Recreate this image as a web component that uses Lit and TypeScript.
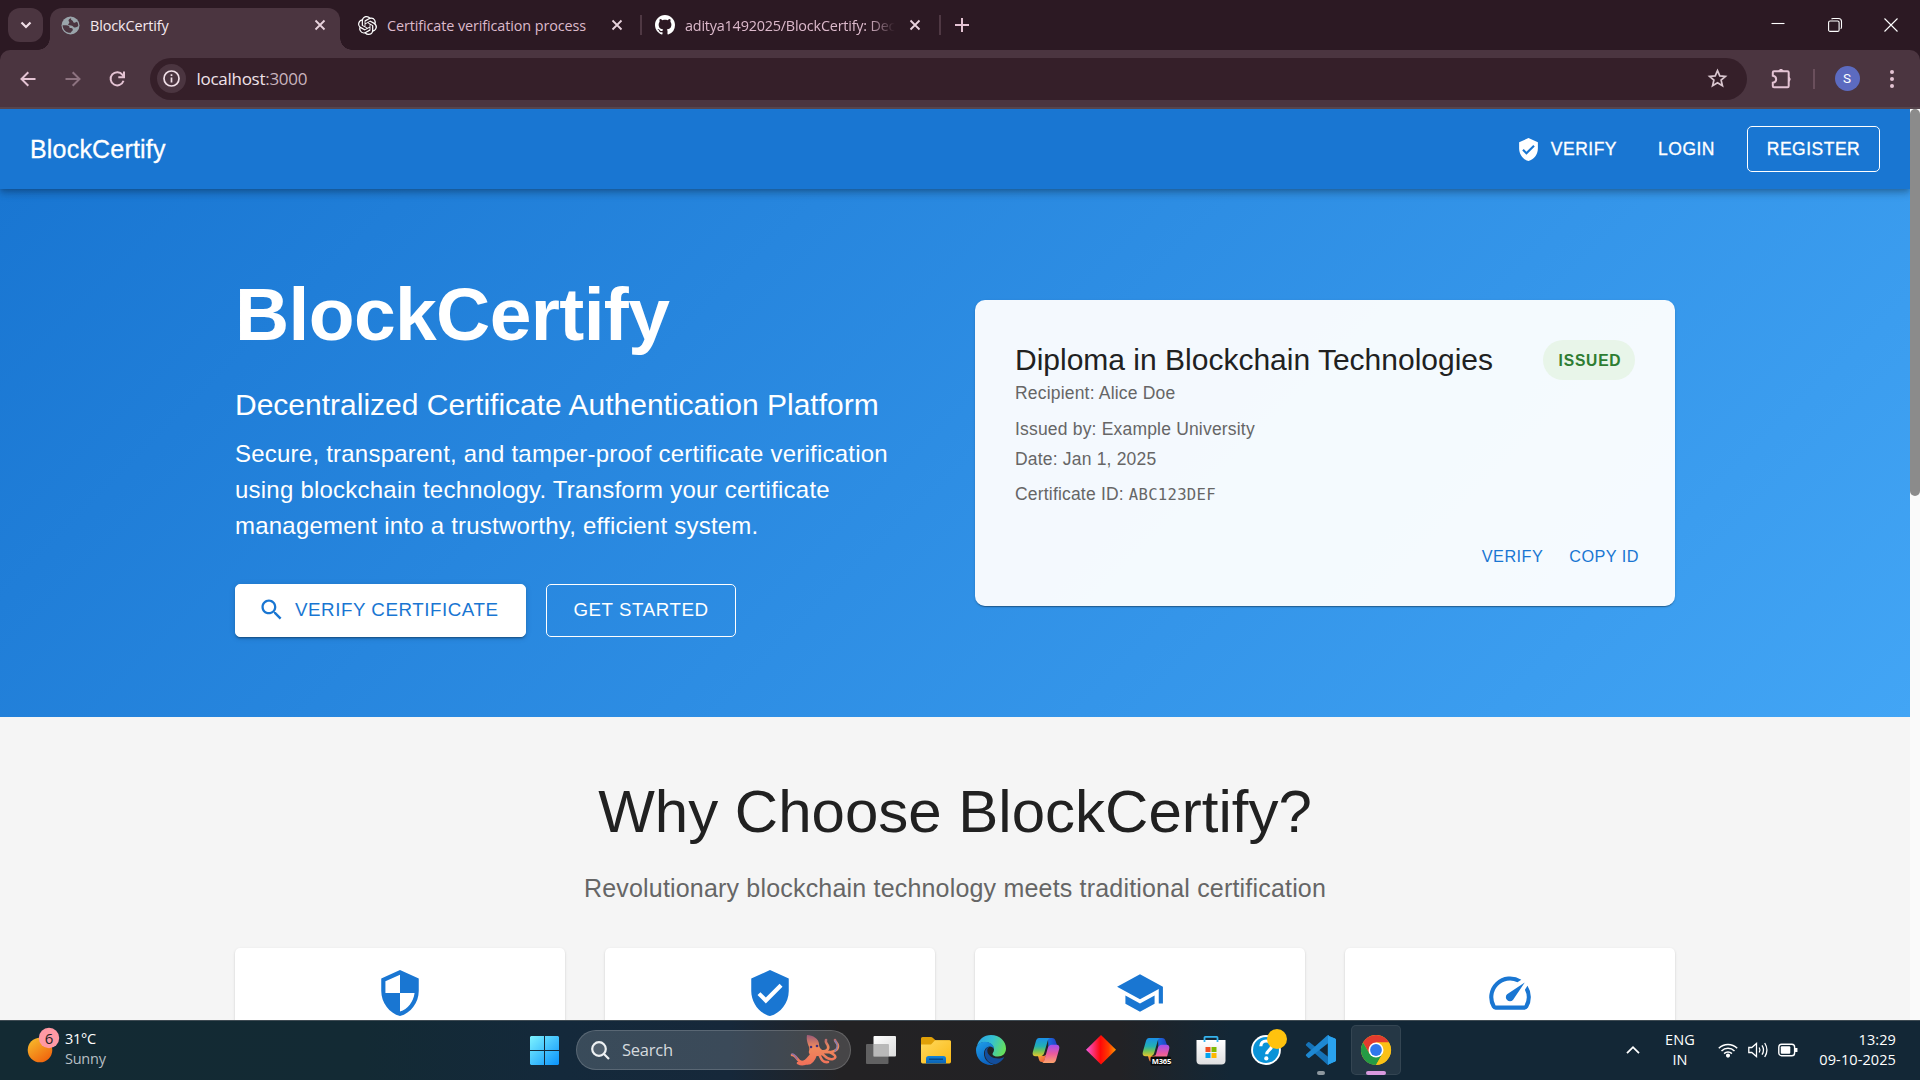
import { LitElement, html, svg, css, TemplateResult } from "lit";
import { customElement } from "lit/decorators.js";

const path = (d: string, cls = "icon") =>
  html`<svg class=${cls} viewBox="0 0 24 24"><path d=${d}></path></svg>`;

const VERIFIED =
  "M12 1L3 5v6c0 5.55 3.84 10.74 9 12 5.16-1.26 9-6.45 9-12V5l-9-4zm-2 16l-4-4 1.41-1.41L10 14.17l6.59-6.59L18 9l-8 8z";
const SECURITY =
  "M12 1L3 5v6c0 5.55 3.84 10.74 9 12 5.16-1.26 9-6.45 9-12V5l-9-4zm0 10.99h7c-.53 4.12-3.28 7.79-7 8.94V12H5V6.3l7-3.11v8.8z";
const SCHOOL =
  "M5 13.18v4L12 21l7-3.82v-4L12 17l-7-3.82zM12 3L1 9l11 6 9-4.91V17h2V9L12 3z";
const SPEED =
  "m20.38 8.57-1.23 1.85a8 8 0 0 1-.22 7.58H5.07A8 8 0 0 1 15.58 6.85l1.85-1.23A10 10 0 0 0 3.35 19a2 2 0 0 0 1.72 1h13.85a2 2 0 0 0 1.74-1 10 10 0 0 0-.27-10.44zm-9.79 6.84a2 2 0 0 0 2.83 0l5.66-8.49-8.49 5.66a2 2 0 0 0 0 2.83z";
const SEARCH =
  "M15.5 14h-.79l-.28-.27C15.41 12.59 16 11.11 16 9.5 16 5.91 13.09 3 9.5 3S3 5.91 3 9.5 5.91 16 9.5 16c1.61 0 3.09-.59 4.23-1.57l.27.28v.79l5 4.99L20.49 19l-4.99-5zm-6 0C7.01 14 5 11.99 5 9.5S7.01 5 9.5 5 14 7.01 14 9.5 11.99 14 9.5 14z";
const OPENAI =
  "M22.2819 9.8211a5.9847 5.9847 0 0 0-.5157-4.9108 6.0462 6.0462 0 0 0-6.5098-2.9A6.0651 6.0651 0 0 0 4.9807 4.1818a5.9847 5.9847 0 0 0-3.9977 2.9 6.0462 6.0462 0 0 0 .7427 7.0966 5.98 5.98 0 0 0 .511 4.9107 6.051 6.051 0 0 0 6.5146 2.9001A5.9847 5.9847 0 0 0 13.2599 24a6.0557 6.0557 0 0 0 5.7718-4.2058 5.9894 5.9894 0 0 0 3.9977-2.9001 6.0557 6.0557 0 0 0-.7475-7.0729zm-9.022 12.6081a4.4755 4.4755 0 0 1-2.8764-1.0408l.1419-.0804 4.7783-2.7582a.7948.7948 0 0 0 .3927-.6813v-6.7369l2.02 1.1686a.071.071 0 0 1 .038.052v5.5826a4.504 4.504 0 0 1-4.4945 4.4944zm-9.6607-4.1254a4.4708 4.4708 0 0 1-.5346-3.0137l.142.0852 4.783 2.7582a.7712.7712 0 0 0 .7806 0l5.8428-3.3685v2.3324a.0804.0804 0 0 1-.0332.0615L9.74 19.9502a4.4992 4.4992 0 0 1-6.1408-1.6464zM2.3408 7.8956a4.485 4.485 0 0 1 2.3655-1.9728V11.6a.7664.7664 0 0 0 .3879.6765l5.8144 3.3543-2.0201 1.1685a.0757.0757 0 0 1-.071 0l-4.8303-2.7865A4.504 4.504 0 0 1 2.3408 7.872zm16.5963 3.8558L13.1038 8.364 15.1192 7.2a.0757.0757 0 0 1 .071 0l4.8303 2.7913a4.4944 4.4944 0 0 1-.6765 8.1042v-5.6772a.79.79 0 0 0-.407-.667zm2.0107-3.0231l-.142-.0852-4.7735-2.7818a.7759.7759 0 0 0-.7854 0L9.409 9.2297V6.8974a.0662.0662 0 0 1 .0284-.0615l4.8303-2.7866a4.4992 4.4992 0 0 1 6.6802 4.66zM8.3065 12.863l-2.02-1.1638a.0804.0804 0 0 1-.038-.0567V6.0742a4.4992 4.4992 0 0 1 7.3757-3.4537l-.142.0805L8.704 5.459a.7948.7948 0 0 0-.3927.6813zm1.0976-2.3654l2.602-1.4998 2.6069 1.4998v2.9994l-2.5974 1.4997-2.6067-1.4997Z";
const GITHUB =
  "M8 0C3.58 0 0 3.58 0 8c0 3.54 2.29 6.53 5.47 7.59.4.07.55-.17.55-.38 0-.19-.01-.82-.01-1.49-2.01.37-2.53-.49-2.69-.94-.09-.23-.48-.94-.82-1.13-.28-.15-.68-.52-.01-.53.63-.01 1.08.58 1.23.82.72 1.21 1.87.87 2.33.66.07-.52.28-.87.51-1.07-1.78-.2-3.64-.89-3.64-3.95 0-.87.31-1.59.82-2.15-.08-.2-.36-1.02.08-2.12 0 0 .67-.21 2.2.82.64-.18 1.32-.27 2-.27s1.36.09 2 .27c1.53-1.04 2.2-.82 2.2-.82.44 1.1.16 1.92.08 2.12.51.56.82 1.27.82 2.15 0 3.07-1.87 3.75-3.65 3.95.29.25.54.73.54 1.48 0 1.07-.01 1.93-.01 2.2 0 .21.15.46.55.38A8.01 8.01 0 0 0 16 8c0-4.42-3.58-8-8-8z";

const closeIcon = html`<svg class="x" viewBox="0 0 12 12"><path d="M1.5 1.5l9 9M10.5 1.5l-9 9"></path></svg>`;

const ribbon = (id: string) => svg`
  <defs>
    <linearGradient id=${id + "a"} x1="0" y1="0" x2="0" y2="1">
      <stop offset="0" stop-color="#1b8fe8"></stop><stop offset=".45" stop-color="#22b0b4"></stop><stop offset=".7" stop-color="#6cc25a"></stop><stop offset="1" stop-color="#e9c42c"></stop>
    </linearGradient>
    <linearGradient id=${id + "b"} x1="0" y1="0" x2="0" y2="1">
      <stop offset="0" stop-color="#a04ff0"></stop><stop offset=".5" stop-color="#ec5a9c"></stop><stop offset="1" stop-color="#fba36a"></stop>
    </linearGradient>
    <linearGradient id=${id + "c"} x1="0" y1="0" x2="1" y2="0">
      <stop offset="0" stop-color="#1b6fe0"></stop><stop offset="1" stop-color="#2142c4"></stop>
    </linearGradient>
    <linearGradient id=${id + "d"} x1="0" y1="0" x2="1" y2="1">
      <stop offset="0" stop-color="#f9b13a"></stop><stop offset="1" stop-color="#ec4f3c"></stop>
    </linearGradient>
  </defs>
  <path d="M17 3h4c2 0 3 1 3.600 3l1.400 4h-5c-2 0-3 .8-3.600 3z" fill=${`url(#${id}c)`}></path>
  <path d="M13 27h-2c-2 0-2.700-1-3.200-3l-.8-3h5c2 0 3-.8 3.600-3z" fill=${`url(#${id}d)`}></path>
  <path d="M8 3h11c-1.500.6-2 1.800-2.500 3.500L13.500 17c-.8 3-2 4.300-4.500 4.300H4.500C2 21.300 1.200 19.500 1.800 17L4.800 6.500C5.400 4.200 6.300 3 8 3z" fill=${`url(#${id}a)`}></path>
  <path d="M22 28H11c1.500-.6 2-1.800 2.500-3.500l3-10.500c.8-3 2-4.300 4.500-4.300h4.500c2.500 0 3.300 1.800 2.700 4.300l-3 10.500c-.6 2.300-1.500 3.500-3.200 3.500z" fill=${`url(#${id}b)`}></path>`;

const app = (body: unknown, cls = "", indicator = "") => html`
  <div class="app ${cls}">
    <svg class="glyph" viewBox="0 0 30 30">${body}</svg>
    ${indicator ? html`<i class="ind ${indicator}"></i>` : null}
  </div>`;

const APPS: TemplateResult[] = [
  app(svg`
    <defs><linearGradient id="tv" x1="0" y1="0" x2="1" y2="1"><stop offset="0" stop-color="#fff"></stop><stop offset="1" stop-color="#dcdcdc"></stop></linearGradient></defs>
    <rect x="7.500" y="1" width="22.500" height="20.500" rx="1" fill="url(#tv)"></rect>
    <rect x="0" y="9" width="22.500" height="20" rx="1" fill="#777" fill-opacity=".75"></rect>
    <path d="M7.500 9h15v12.500h-15z" fill="#b9b9b9"></path>`),
  app(svg`
    <defs><linearGradient id="fo" x1="0" y1="0" x2="1" y2="1"><stop offset="0" stop-color="#ffd95e"></stop><stop offset="1" stop-color="#fbb914"></stop></linearGradient>
    <linearGradient id="fb" x1="0" y1="0" x2="0" y2="1"><stop offset="0" stop-color="#1484d8"></stop><stop offset="1" stop-color="#0a62b4"></stop></linearGradient></defs>
    <path d="M0 3.500Q0 2 1.500 2h8.500q1 0 2 1l2.500 2.300H28q2 0 2 1.500V14H0z" fill="#e0a008"></path>
    <path d="M0 9.500h10l4-4.200h14.500q1.500 0 1.500 1.500v20q0 1.700-1.700 1.700H1.700Q0 28.500 0 26.800z" fill="url(#fo)"></path>
    <path d="M5 28.500V23.500q0-2.500 2.500-2.500h15q2.500 0 2.500 2.500v5z" fill="url(#fb)"></path>
    <path d="M8 24.200h14" stroke="#053f78" stroke-width="1.200"></path>`),
  app(svg`
    <defs>
      <linearGradient id="e1" x1="0" y1=".2" x2="1" y2=".5"><stop offset="0" stop-color="#2aa4e6"></stop><stop offset=".5" stop-color="#35c1d0"></stop><stop offset="1" stop-color="#66e05c"></stop></linearGradient>
      <linearGradient id="e2" x1="0" y1="0" x2=".5" y2="1"><stop offset="0" stop-color="#1fa0ea"></stop><stop offset="1" stop-color="#0c62c0"></stop></linearGradient>
    </defs>
    <path d="M1 11C2.500 4.500 8 0 15 0c8.500 0 15 6 15 13.500 0 5-3.500 8-8 8-3.500 0-5.500-1.300-5.500-2.600 0-1 1.500-1.700 1.500-4.400C18 10 13.500 7 9 7 5 7 2.500 8.800 1 11z" fill="url(#e1)"></path>
    <path d="M0 15C0 10 4 6.800 9 6.800c5 0 8.800 3 9 7.200-.8-1.600-2.300-2.500-4-2.500-3.500 0-6 3.300-6 7 0 5.500 4 10 10 11.200-1 .2-2 .3-3 .3C6.500 30 0 23.500 0 15z" fill="url(#e2)"></path>
    <path d="M14 11.500c-3.200.3-5.200 3.200-5.200 6.800 0 6 4.700 10.800 10.700 11 3.500-1 6.500-3.300 8.300-6.200.3-.6-.3-1-.8-.7-1.300.7-3 1-4.700 1-6 0-11-3.500-11-8 0-1.600 1-3 2.700-3.900z" fill="#134e9c"></path>`),
  app(ribbon("cp")),
  app(svg`
    <defs><linearGradient id="di" x1="0" y1="0" x2="1" y2="0"><stop offset="0" stop-color="#f45ae0"></stop><stop offset=".48" stop-color="#ff0808"></stop><stop offset=".75" stop-color="#ff3b00"></stop><stop offset="1" stop-color="#ff9a00"></stop></linearGradient></defs>
    <path d="M15 0l15 14.700L15 29.400 0 14.700z" fill="url(#di)"></path>`),
  app(svg`${ribbon("mc")}
    <rect x="9.500" y="21.500" width="20.500" height="9" rx="1.500" fill="#0a0a0a"></rect>
    <text class="tag" x="10.800" y="28.600">M365</text>`),
  app(svg`
    <defs><linearGradient id="st" x1="0" y1="0" x2="0" y2="1"><stop offset="0" stop-color="#fff"></stop><stop offset="1" stop-color="#dfdfe0"></stop></linearGradient></defs>
    <path d="M.5 5h29v20.500q0 4-4 4h-21q-4 0-4-4z" fill="url(#st)"></path>
    <path d="M8.500 7V2.500q0-.7.7-.7h11.600q.7 0 .7.700V7" fill="none" stroke="#35b4ee" stroke-width="1.800"></path>
    <rect x="9.500" y="12" width="5" height="5" fill="#f04f23"></rect><rect x="15.500" y="12" width="5" height="5" fill="#7fb900"></rect>
    <rect x="9.500" y="18" width="5" height="5" fill="#01a3ee"></rect><rect x="15.500" y="18" width="5" height="5" fill="#feb800"></rect>`),
  app(svg`
    <circle cx="15" cy="15" r="14.900" fill="#fff"></circle><circle cx="15" cy="15" r="13" fill="#0a93d8"></circle>
    <path d="M9.800 11.200C9.800 7.900 12 6 15.200 6c3.300 0 5.500 1.900 5.500 4.700 0 4.200-5 4.600-5 8.600" fill="none" stroke="#fff" stroke-width="3.200"></path>
    <circle cx="15.300" cy="23.400" r="2.100" fill="#fff"></circle>
    <circle cx="26" cy="4" r="10" fill="#ffc20e"></circle>`),
  app(svg`
    <path d="M21.800.5L29 3.600q1 .5 1 1.500V25q0 1-1 1.500l-7.200 3.200z" fill="#29a3ee"></path>
    <path d="M0 9.200l2-1.900q.7-.5 1.500 0L23 22.500V30q-1 .2-1.800-.6L.3 10.800Q-.5 10 0 9.200z" fill="#1673b8"></path>
    <path d="M0 20.800l2 1.900q.7.500 1.500 0L23 7.500V0q-1-.2-1.800.6L.3 19.200Q-.5 20 0 20.800z" fill="#1e88d2"></path>
    <path d="M22 1v28.500L29 26.500q1-.5 1-1.500V5q0-1-1-1.500z" fill="#2aa2ee"></path>`, "", "dot"),
  app(svg`
    <circle cx="15" cy="15" r="15" fill="#fbc116"></circle>
    <path d="M2 7.500A15 15 0 0 1 28 7.500H15L8.500 18.750z" fill="#e33b2e"></path>
    <path d="M2 7.500A15 15 0 0 0 15 30L21.500 18.750H8.500z" fill="#249b45"></path>
    <path d="M15 30A15 15 0 0 0 28 7.500H15l6.500 11.250z" fill="#fbc116"></path>
    <circle cx="15" cy="15" r="7.500" fill="#fff"></circle><circle cx="15" cy="15" r="5.900" fill="#2f78ec"></circle>`, "active", "bar"),
];

@customElement("app-root")
export class AppRoot extends LitElement {
  static styles = css`
    :host {
      display: flex;
      flex-direction: column;
      width: 1920px;
      height: 1080px;
      overflow: hidden;
      font-family: "Liberation Sans", Arial, sans-serif;
      --strip: #2c1923;
      --bar: #4b3540;
      --pink: #e4c3d3;
    }
    * { box-sizing: border-box; }
    svg { display: block; flex: none; overflow: visible; }
    h1, h2, h3, p { margin: 0; font-weight: 400; }
    .ui { font-family: "Open Sans", "Noto Sans", sans-serif; }

    /* browser frame */
    .strip { height: 50px; background: var(--strip); display: flex; flex: none; padding-left: 8px; }
    .tabsearch { width: 35px; height: 34px; margin-top: 8px; border-radius: 12px; background: var(--bar); display: grid; place-items: center; }
    .tabsearch svg { width: 12px; height: 8px; stroke: #f0dfe7; stroke-width: 2.2; fill: none; }
    .tab { height: 50px; display: flex; align-items: center; font-size: 14.4px; letter-spacing: -.1px; color: #dcb9cb; white-space: nowrap; }
    .tab .fav { width: 19px; height: 19px; margin-right: 10px; }
    .tab.on { position: relative; width: 290px; height: 42px; margin: 8px 0 0 7px; padding: 0 14px 8px 11px; background: var(--bar); border-radius: 12px 12px 0 0; color: #f6e9ef; }
    .tab.on::before, .tab.on::after { content: ""; position: absolute; bottom: 0; width: 12px; height: 12px; }
    .tab.on::before { left: -12px; background: radial-gradient(circle at 0 0, transparent 11.500px, var(--bar) 12px); }
    .tab.on::after { right: -12px; background: radial-gradient(circle at 100% 0, transparent 11.500px, var(--bar) 12px); }
    .grow { flex: 1; }
    .x { width: 12px; height: 12px; fill: none; stroke: #e8d3dd; stroke-width: 1.8; }
    .t2 { width: 300px; padding: 0 17px 0 18px; }
    .t3 { width: 297px; padding: 0 18px 0 13px; letter-spacing: -.2px; }
    .t3 .lbl { -webkit-mask: linear-gradient(90deg, #000 87%, transparent); mask: linear-gradient(90deg, #000 87%, transparent); }
    .t3 .fav { width: 20px; height: 20px; fill: #fff; }
    .sep { width: 2px; height: 20px; margin-top: 15px; background: #4f3843; }
    .plus { width: 14px; height: 14px; margin: 18px 0 0 14px; stroke: var(--pink); stroke-width: 2; }
    .win { margin-left: auto; display: flex; padding: 18px 22px 0 0; gap: 42.500px; }
    .win svg { width: 14px; height: 14px; fill: none; stroke: #fff; stroke-width: 1.100; }

    .corner { background: var(--strip); flex: none; }
    .toolbar { height: 59px; background: var(--bar); border-radius: 10px 10px 0 0; border-bottom: 2px solid #57454d; display: flex; align-items: center; padding-left: 20px; }
    .tb { width: 16px; height: 16px; margin-right: 28.500px; fill: none; stroke: var(--pink); stroke-width: 2; }
    .tb.dim { stroke: #8d7380; }
    .omni { width: 1597px; height: 42px; margin-left: -4px; border-radius: 21px; background: #351f29; display: flex; align-items: center; padding: 0 20px 0 7px; color: #f1e3ea; font-size: 17px; letter-spacing: -.28px; }
    .info { width: 29px; height: 29px; margin-right: 11px; border-radius: 50%; background: var(--bar); display: grid; place-items: center; }
    .info svg { width: 17px; height: 17px; fill: none; stroke: #f0dfe7; stroke-width: 1.700; }
    .host { color: #c9b4be; }
    .star { width: 19px; height: 19px; fill: none; stroke: #d9c6cf; stroke-width: 1.800; }
    .puzzle { width: 21px; height: 21px; margin-left: 24px; fill: none; stroke: var(--pink); stroke-width: 2; }
    .tsep { width: 2px; height: 20px; margin-left: 21px; background: #6a4f5c; }
    .avatar { width: 25px; height: 25px; margin-left: 20px; border-radius: 50%; background: #5c6bc0; color: #fff; font: 13.500px/25px Roboto, sans-serif; text-align: center; }
    .menu { width: 4px; height: 18px; margin-left: 30.500px; fill: var(--pink); }

    /* page */
    .view { height: 911px; flex: none; display: flex; overflow: hidden; }
    .page { width: 1910px; overflow: hidden; background: #f5f5f5; }
    .scroll { width: 10px; background: #fafafa; }
    .thumb { height: 387px; border-radius: 5px; background: #8b8b8b; }
    .appbar { position: relative; z-index: 2; height: 80px; background: #1976d2; color: #fff; display: flex; align-items: center; padding: 0 30px; box-shadow: 0 2.500px 5px -1.250px rgba(0,0,0,.2), 0 5px 6.250px rgba(0,0,0,.14), 0 1.250px 12.500px rgba(0,0,0,.12); }
    .brand { flex: 1; font-size: 25px; line-height: 40px; letter-spacing: .1875px; -webkit-text-stroke: .3px currentColor; }
    .btn { display: inline-flex; align-items: center; justify-content: center; white-space: nowrap; border-radius: 5px; letter-spacing: .02857em; }
    .nav { height: 46px; font-size: 17.500px; line-height: 30.600px; padding: 0 10px; -webkit-text-stroke: .3px currentColor; }
    .nav .icon { width: 25px; height: 25px; margin-right: 10px; fill: #fff; }
    .nav.login { margin-left: 21px; }
    .nav.out { margin-left: 22px; border: 1px solid #fff; width: 133px; padding: 0; }

    .hero { height: 528px; padding: 80px 235px; background: linear-gradient(135deg, #1976d2 0%, #42a5f5 100%); color: #fff; display: grid; grid-template-columns: 700px 700px; gap: 40px; align-items: center; }
    .hero h1 { font-size: 75px; font-weight: 700; line-height: 90px; letter-spacing: -.625px; margin-bottom: 25.250px; }
    .hero h2 { font-size: 30px; line-height: 40px; margin-bottom: 11px; }
    .hero .lead { font-size: 24px; line-height: 36px; letter-spacing: .225px; margin-bottom: 40px; }
    .actions { display: flex; gap: 20px; }
    .big { height: 53px; font-size: 18.750px; border: 1px solid #fff; padding: 0 26.500px; padding-bottom: 1px; }
    .big.solid { background: #fff; color: #1976d2; box-shadow: 0 3px 1px -2px rgba(0,0,0,.2), 0 2px 2px rgba(0,0,0,.14), 0 1px 6px rgba(0,0,0,.12); }
    .big .icon { width: 27.500px; height: 27.500px; margin: 1px 10px 0 -5px; fill: #1976d2; }

    .cert { height: 306px; border-radius: 10px; background: rgba(255,255,255,.95); padding: 40px; color: #666; font-size: 17.500px; line-height: 25px; letter-spacing: .187px; display: flex; flex-direction: column; box-shadow: 0 2px 1px -1px rgba(0,0,0,.2), 0 1px 1px rgba(0,0,0,.14), 0 1px 3px rgba(0,0,0,.12); }
    .chead { display: flex; justify-content: space-between; height: 41px; flex: none; }
    .chead h3 { font-size: 30px; line-height: 40px; letter-spacing: 0; color: #212121; }
    .chip { width: 92px; height: 40px; border-radius: 20px; background: #e8f5e9; color: #2e7d32; font-size: 15.600px; font-weight: 700; line-height: 41px; letter-spacing: .8px; text-align: center; padding-left: 2px; }
    .issuer { margin-top: 11px; }
    .date { margin-top: 5px; }
    .cid { margin-top: 10px; }
    .mono { font-family: "DejaVu Sans Mono", monospace; font-size: 15.600px; letter-spacing: .28px; }
    .links { margin-top: auto; display: flex; justify-content: flex-end; gap: 26px; margin-right: -4px; margin-bottom: -7px; color: #1976d2; font-size: 16.250px; line-height: 34px; letter-spacing: .46px; }

    .why { padding-top: 60px; text-align: center; }
    .why h2 { font-size: 60px; line-height: 70px; color: #212121; }
    .why .sub { margin-top: 21px; font-size: 25px; line-height: 40px; letter-spacing: .1875px; color: #666; }
    .cards { margin-top: 40px; padding: 0 235px; display: grid; grid-template-columns: repeat(4, 330px); gap: 40px; }
    .feat { height: 200px; border-radius: 5px; background: #fff; padding-top: 20px; box-shadow: 0 2px 1px -1px rgba(0,0,0,.2), 0 1px 1px rgba(0,0,0,.14), 0 1px 3px rgba(0,0,0,.12); }
    .feat .icon { width: 50px; height: 50px; margin: 0 auto; fill: #1976d2; }

    /* taskbar */
    .task { height: 60px; flex: none; border-top: 1px solid #3f4b53; padding-bottom: 1px; display: flex; align-items: center; color: #fff; font-size: 14.500px; line-height: 20px; letter-spacing: -.25px; background: linear-gradient(90deg, #132a33 0, #132a34 360px, #14293b 560px, #16283a 730px, #232224 840px, #222225 1120px, #132736 1230px, #132736 100%); }
    .weather { width: 517px; display: flex; align-items: center; padding: 0 0 2px 26px; gap: 6px; }
    .weather svg { width: 33px; height: 40px; }
    .weather text { font: 15px "Open Sans", sans-serif; fill: #222; }
    .muted { color: #b7bfc3; }
    .start { width: 55px; display: grid; place-items: center; }
    .start svg { width: 29px; height: 29px; }
    .search { width: 275px; height: 40px; margin: 0 2.500px 0 4px; border-radius: 20px; border: 1px solid rgba(255,255,255,.16); background: rgba(255,255,255,.16); display: flex; align-items: center; padding: 0 11px 0 14px; font-size: 16.500px; color: #d5dade; }
    .search .mag { width: 19px; height: 19px; margin-right: 12px; fill: rgba(255,255,255,.12); stroke: #eef1f3; stroke-width: 2.200; }
    .octo { width: 48px; height: 30px; margin-left: auto; fill: none; stroke-linecap: round; }
    .app { position: relative; width: 55px; height: 58px; display: grid; place-items: center; }
    .glyph { width: 30px; height: 30px; }
    .app.active::before { content: ""; position: absolute; inset: 4px 3px 4px 2px; border-radius: 5px; background: rgba(255,255,255,.08); border: 1px solid rgba(255,255,255,.07); }
    .active .glyph { position: relative; }
    .ind { position: absolute; bottom: 4px; height: 4px; border-radius: 2px; left: 50%; transform: translateX(-50%); }
    .dot { width: 8px; background: #8e989f; }
    .bar { width: 20px; background: #d99adf; }
    .tag { font: 700 7.600px "Open Sans", sans-serif; fill: #fff; }
    .tray { margin-left: auto; display: flex; align-items: center; padding: 0 24px 1px 0; letter-spacing: .1px; }
    .tray svg { fill: none; stroke: #fff; }
    .chev { width: 14px; height: 8px; stroke-width: 1.800; margin-right: 25px; }
    .lang { width: 30px; text-align: center; margin-right: 23px; }
    .sys { display: flex; gap: 10px; align-items: center; margin-right: 20px; }
    .sys svg { width: 20px; height: 20px; }
    .clock { width: 78px; text-align: right; white-space: nowrap; display: flex; flex-direction: column; align-items: flex-end; }
  `;

  private frame() {
    return html`
      <div class="strip ui">
        <div class="tabsearch"><svg viewBox="0 0 12 8"><path d="M1.500 1.500L6 6l4.500-4.500"></path></svg></div>
        <div class="tab on">
          <svg class="fav" viewBox="0 0 19 19"><circle cx="9.500" cy="9.500" r="9" fill="#9aa5ab"></circle>
            <path d="M1.600 9.200l3.600.1c2.300.1 3.600 1.100 3.400 2.700h1.500c1.200 0 1.800.8 1.700 1.900-.2 1.400-1.700 1.300-2 2.900-4.300.3-8-2.800-8.200-7.600z" fill="#4b3540"></path>
            <path d="M10.300 1.900c-1.200.8-2.800 1.200-2.800 2.600 0 1 .9 1.100.8 2-.1 1.100-1.300 1.200-1.100 2.200.2 1 2.500.6 3.900 1 1.200.4 1.300 1.600 2.500 1.700 1.400.2 2.800-.5 3.700-1.400 0-1.600-.4-3-1.200-4.200-1.200-.1-1.500 1-2.700.9-1.600-.2-1-1.800-2.200-2.300-1-.5-1.700-1.600-.9-2.500z" fill="#4b3540"></path></svg>
          <span class="lbl">BlockCertify</span><span class="grow"></span>${closeIcon}
        </div>
        <div class="tab t2">
          <svg class="fav" viewBox="0 0 24 24"><path fill="#fff" d=${OPENAI}></path></svg>
          <span class="lbl">Certificate verification process</span><span class="grow"></span>${closeIcon}
        </div>
        <i class="sep"></i>
        <div class="tab t3">
          <svg class="fav" viewBox="0 0 16 16"><path d=${GITHUB}></path></svg>
          <span class="lbl">aditya1492025/BlockCertify: Dec</span><span class="grow"></span>${closeIcon}
        </div>
        <i class="sep"></i>
        <svg class="plus" viewBox="0 0 14 14"><path d="M7 0v14M0 7h14"></path></svg>
        <div class="win">
          <svg viewBox="0 0 14 14"><path d="M.5 5.500h13"></path></svg>
          <svg viewBox="0 0 14 14"><rect x=".6" y="3" width="10.500" height="10.400" rx="1.500"></rect><path d="M3.500 1Q4 .500 5 .500h5.500q3 0 3 3V9q0 1.200-.8 1.700"></path></svg>
          <svg viewBox="0 0 14 14"><path d="M.5.500l13 13M13.500.500l-13 13"></path></svg>
        </div>
      </div>
      <div class="corner">
        <div class="toolbar ui">
          <svg class="tb" viewBox="0 0 16 16"><path d="M15.500 8H1.800M8.300 1.200L1.500 8l6.800 6.800"></path></svg>
          <svg class="tb dim" viewBox="0 0 16 16"><path d="M.5 8h13.700M7.700 1.200L14.500 8l-6.800 6.800"></path></svg>
          <svg class="tb" viewBox="0 0 16 16"><path d="M14.500 9.800A6.600 6.600 0 1 1 13.500 3.800L14.800 5.500M15 .500V6.200H9.300"></path></svg>
          <div class="omni">
            <span class="info"><svg viewBox="0 0 17 17"><circle cx="8.500" cy="8.500" r="7.500"></circle><path d="M8.500 7.500v5M8.500 4.300v1.800"></path></svg></span>
            <span>localhost<span class="host">:3000</span></span><span class="grow"></span>
            <svg class="star" viewBox="0 0 20 20"><path d="M10 1.800l2.400 5.500 5.900.5-4.500 3.900 1.400 5.900-5.200-3.100-5.200 3.100 1.400-5.900-4.500-3.900 5.900-.5z"></path></svg>
          </div>
          <svg class="puzzle" viewBox="0 0 21 21"><path d="M3 3.200h13.500q1.200 0 1.200 1.200V18q0 1.200-1.200 1.200H3Q1.800 19.200 1.800 18v-3.300c4.500-.8 4.500-6.200 0-7V4.400Q1.800 3.200 3 3.200z"></path><path d="M7.800 3a2.300 2.300 0 0 1 4.400 0zM17.800 9.200a2.300 2.300 0 0 1 0 4.200z" fill="#e4c3d3" stroke-width="1"></path></svg>
          <i class="tsep"></i>
          <span class="avatar">S</span>
          <svg class="menu" viewBox="0 0 4 18"><circle cx="2" cy="2" r="2"></circle><circle cx="2" cy="9" r="2"></circle><circle cx="2" cy="16" r="2"></circle></svg>
        </div>
      </div>`;
  }

  private page() {
    return html`
      <div class="view">
        <div class="page">
          <header class="appbar">
            <span class="brand">BlockCertify</span>
            <span class="btn nav">${path(VERIFIED)}VERIFY</span>
            <span class="btn nav login">LOGIN</span>
            <span class="btn nav out">REGISTER</span>
          </header>
          <section class="hero">
            <div>
              <h1>BlockCertify</h1>
              <h2>Decentralized Certificate Authentication Platform</h2>
              <p class="lead">Secure, transparent, and tamper-proof certificate verification using blockchain technology. Transform your certificate management into a trustworthy, efficient system.</p>
              <div class="actions">
                <span class="btn big solid">${path(SEARCH)}VERIFY CERTIFICATE</span>
                <span class="btn big">GET STARTED</span>
              </div>
            </div>
            <div class="cert">
              <div class="chead"><h3>Diploma in Blockchain Technologies</h3><span class="chip">ISSUED</span></div>
              <p>Recipient: Alice Doe</p>
              <p class="issuer">Issued by: Example University</p>
              <p class="date">Date: Jan 1, 2025</p>
              <p class="cid">Certificate ID: <span class="mono">ABC123DEF</span></p>
              <div class="links"><span>VERIFY</span><span>COPY ID</span></div>
            </div>
          </section>
          <section class="why">
            <h2>Why Choose BlockCertify?</h2>
            <p class="sub">Revolutionary blockchain technology meets traditional certification</p>
            <div class="cards">
              ${[SECURITY, VERIFIED, SCHOOL, SPEED].map((d) => html`<div class="feat">${path(d)}</div>`)}
            </div>
          </section>
        </div>
        <div class="scroll"><div class="thumb"></div></div>
      </div>`;
  }

  private taskbar() {
    return html`
      <footer class="task ui">
        <div class="weather">
          <svg viewBox="0 0 33 40">
            <defs><linearGradient id="sun" x1=".1" y1="0" x2=".8" y2="1"><stop offset="0" stop-color="#f7bd2c"></stop><stop offset="1" stop-color="#f0600c"></stop></linearGradient></defs>
            <circle cx="14" cy="21" r="12.300" fill="url(#sun)"></circle>
            <circle cx="23" cy="9" r="10.200" fill="#ff99a4"></circle>
            <text x="18.800" y="14.500">6</text>
          </svg>
          <div><div>31°C</div><div class="muted">Sunny</div></div>
        </div>
        <div class="start">
          <svg viewBox="0 0 29 29"><defs><linearGradient id="win" gradientUnits="userSpaceOnUse" x1="0" y1="0" x2="29" y2="29"><stop offset="0" stop-color="#7df3ff"></stop><stop offset="1" stop-color="#0a92fb"></stop></linearGradient></defs>
            <path fill="url(#win)" d="M1 0h13v14H0V1zM15 0h13l1 1v13H15zM0 15h14v14H1l-1-1zM15 15h14v13l-1 1H15z"></path></svg>
        </div>
        <div class="search">
          <svg class="mag" viewBox="0 0 19 19"><circle cx="8" cy="8" r="6.800"></circle><path d="M13 13l5 5"></path></svg>
          <span>Search</span>
          <svg class="octo" viewBox="0 0 48 30">
            <defs><linearGradient id="oc" gradientUnits="userSpaceOnUse" x1="0" y1="0" x2="0" y2="30"><stop offset="0" stop-color="#9a5a78"></stop><stop offset=".4" stop-color="#f08a5c"></stop><stop offset="1" stop-color="#f0705a"></stop></linearGradient></defs>
            <path d="M1 20c4-1 5 7 10 7s7-6 11-9M7 28c6 3 11 0 16-9M14 28c6 2 9-3 11-9M28 19c2 4 3 9 9 8M30 18c4 2 6 8 12 6s-1-6-4-7M30 16c6 1 8-2 7-5s-3-3-2-6M32 17c9 1 15-1 15-6 0-3-3-4-3-6" stroke="url(#oc)" stroke-width="2.600"></path>
            <path d="M16 0c6 0 12 4 12 9 0 3 1 4 3 6s2 6-3 6-9 1-10-3c-.6-2 1-3 0-6C17 9 15 5 16 0z" fill="url(#oc)"></path>
            <circle cx="20" cy="12" r="1.300" fill="#46307a"></circle><circle cx="26" cy="11" r="1.300" fill="#46307a"></circle>
            <path d="M44 6c3 3 3 7 0 10" stroke="#7580c0" stroke-width="1.200"></path>
            <path d="M1 19c3 0 4 3 5 5" stroke="#8a70a8" stroke-width="1.400"></path>
          </svg>
        </div>
        ${APPS}
        <div class="tray">
          <svg class="chev" viewBox="0 0 14 8"><path d="M1 7.200l6-6 6 6"></path></svg>
          <div class="lang"><div>ENG</div><div>IN</div></div>
          <div class="sys">
            <svg viewBox="0 0 20 20" stroke-width="1.500"><path d="M.8 8.300a13 13 0 0 1 18.400 0M3.500 11a9.200 9.200 0 0 1 13 0M6.100 13.600a5.600 5.600 0 0 1 7.800 0"></path><circle cx="10" cy="15.600" r="1.300" fill="#fff"></circle></svg>
            <svg viewBox="0 0 20 20" stroke-width="1.300"><path d="M.8 7.500v5h3L8.500 16.500V3.500L3.800 7.500zM11.200 7.500q1.500 2.500 0 5M14 5.300q3 4.700 0 9.400M16.700 3q4.500 7 0 14"></path></svg>
            <svg viewBox="0 0 20 20" stroke-width="1.400"><rect x=".8" y="4.300" width="15.800" height="11.400" rx="2.800"></rect><rect x="2.800" y="6.300" width="9.500" height="7.400" rx="1" fill="#fff" stroke="none"></rect><path d="M18.200 8v4" stroke-width="2.500"></path></svg>
          </div>
          <div class="clock"><span>13:29</span><span>09-10-2025</span></div>
        </div>
      </footer>`;
  }

  render() {
    return html`${this.frame()}${this.page()}${this.taskbar()}`;
  }
}
